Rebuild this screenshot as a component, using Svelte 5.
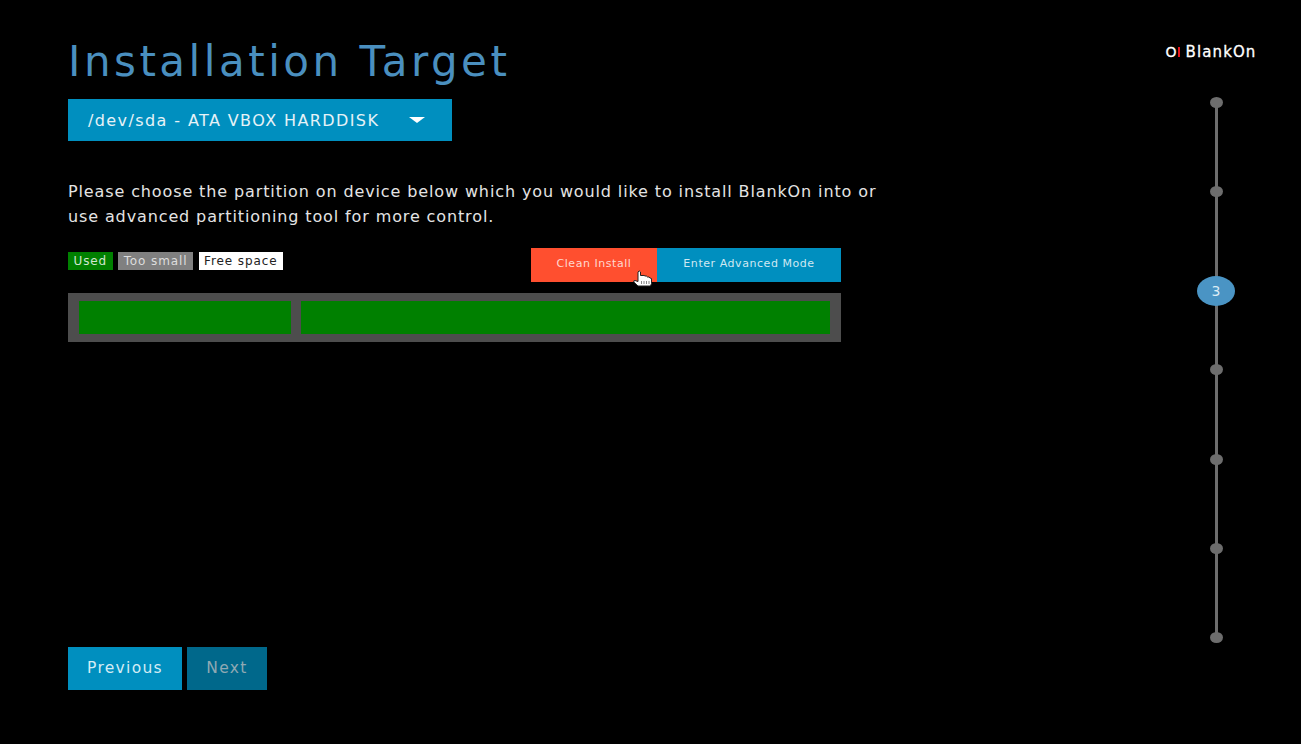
<script lang="ts">
	// Installer step 3: pick a target disk and partition.
	const legend = [
		{ label: 'Used', cls: 'used' },
		{ label: 'Too small', cls: 'small' },
		{ label: 'Free space', cls: 'free' },
	];
	const partitions = [212, 529];
	const steps = [1, 2, 3, 4, 5, 6, 7];
	const current = 3;
</script>

<div class="page">
	<main class="content">
		<h1>Installation Target</h1>
		<button class="device">
			<span>/dev/sda - ATA VBOX HARDDISK</span>
			<i class="caret"></i>
		</button>
		<p class="intro">
			Please choose the partition on device below which you would like to install BlankOn into or<br />
			use advanced partitioning tool for more control.
		</p>

		<div class="tools">
			<div class="legend">
				{#each legend as l (l.label)}
					<span class={l.cls}>{l.label}</span>
				{/each}
			</div>
			<div class="actions">
				<button class="clean">Clean Install</button>
				<button class="advanced">Enter Advanced Mode</button>
				<svg class="cursor" width="20" height="17" viewBox="0 0 20 17">
					<path d="M5 2 Q6.200 -.2 7.500 2 V5.500 L10 5.500 Q11 5 12 6 Q13.500 5.500 14.500 7 Q16 6.500 17 8 L18.500 8.500 V13.500 L17.500 16 H5 L.8 12 Q.3 10.500 2 10.500 L5 11.500 Z" fill="#fff" stroke="#222" stroke-width="1" stroke-linejoin="round" />
					<path d="M8.500 11v3M11 11v3M13.500 11v3M16 11v3" stroke="#888" stroke-width="1" fill="none" />
				</svg>
			</div>
		</div>

		<div class="disk">
			{#each partitions as w}
				<div class="part" style="width: {w}px"></div>
			{/each}
		</div>

		<nav class="footer">
			<button class="prev">Previous</button>
			<button class="next" disabled>Next</button>
		</nav>
	</main>

	<aside class="side">
		<div class="logo">
			<span class="mark">O<b></b></span>
			<span>BlankOn</span>
		</div>
		<ol class="rail">
			{#each steps as s}
				<li class:active={s === current}>{s === current ? s : ''}</li>
			{/each}
		</ol>
	</aside>
</div>

<style>
	:global(body) { background: #000; }
	.page { display: flex; justify-content: space-between; height: 744px; background: #000; color: #eee; font-family: "DejaVu Sans", sans-serif; overflow: hidden; }
	.content { display: flex; flex-direction: column; width: 773px; margin-left: 68px; }
	button { border: 0; font-family: inherit; color: #e6f2f7; padding: 0; }
	h1 { margin: 34px 0 0; height: 65px; font-size: 42px; line-height: 56px; font-weight: 400; letter-spacing: 3.5px; color: #4a8fbf; white-space: nowrap; }
	.device { display: flex; align-items: center; justify-content: space-between; width: 384px; height: 42px; padding: 0 27px 0 20px; background: #008fbf; font-size: 16px; letter-spacing: 1.4px; }
	.caret { border: 8px solid transparent; border-top: 6px solid #fff; border-bottom: 0; }
	.intro { margin: 39px 0 0; font-size: 16px; line-height: 24.500px; letter-spacing: 0.88px; color: #e4e4e4; white-space: nowrap; }
	.tools { display: flex; justify-content: space-between; margin-top: 19px; }
	.legend { display: flex; gap: 5.500px; height: 18px; margin-top: 4px; font-size: 12px; line-height: 18px; letter-spacing: 0.9px; }
	.legend span { padding: 0 5.500px; }
	.used { background: #008000; color: #cfe6cf; }
	.small { background: #808080; color: #ddd; }
	.free { background: #fff; color: #222; }
	.actions { position: relative; display: flex; height: 34px; }
	.actions button { height: 34px; padding-bottom: 4px; font-size: 11px; letter-spacing: 0.55px; }
	.clean { width: 126px; background: #ff4f2f; color: #ffd8d0; }
	.advanced { width: 184px; background: #008fbf; color: #cfe8f2; }
	.cursor { position: absolute; left: 102px; top: 22px; }
	.disk { display: flex; gap: 10px; align-items: center; height: 49px; margin-top: 11px; padding: 0 11px; background: #4d4d4d; }
	.part { height: 33px; background: #008000; }
	.footer { display: flex; gap: 5px; margin-top: auto; margin-bottom: 54px; }
	.footer button { height: 43px; padding-bottom: 2px; font-size: 15.500px; letter-spacing: 1.3px; }
	.prev { width: 114px; background: #008fbf; color: #d4ecf5; }
	.next { width: 80px; background: #00688b; color: #8fa9b3; }
	.side { display: flex; flex-direction: column; align-items: center; width: 92px; margin-right: 44px; }
	.logo { display: flex; align-items: center; gap: 6px; height: 20px; margin-top: 42px; font-size: 15px; letter-spacing: 1.1px; -webkit-text-stroke: 0.3px #fff; color: #fff; white-space: nowrap; }
	.mark { display: flex; align-items: center; gap: 1px; font-size: 14px; letter-spacing: 0; }
	.mark b { width: 2px; height: 10px; background: #e8141c; }
	.rail { position: relative; display: flex; flex-direction: column; justify-content: space-between; align-items: center; height: 546px; margin: 35px 0 0 10px; padding: 0; list-style: none; }
	.rail::before { content: ""; position: absolute; top: 5px; bottom: 5px; left: 50%; width: 3px; margin-left: -1.500px; background: #6d6d6d; }
	.rail li { position: relative; width: 13px; height: 11px; border-radius: 50%; background: #6d6d6d; }
	.rail li.active { width: 38px; height: 30px; margin-top: 1px; margin-bottom: -20px; background: #4a94c4; color: #dcecf5; font-size: 14px; line-height: 30px; text-align: center; }
</style>
